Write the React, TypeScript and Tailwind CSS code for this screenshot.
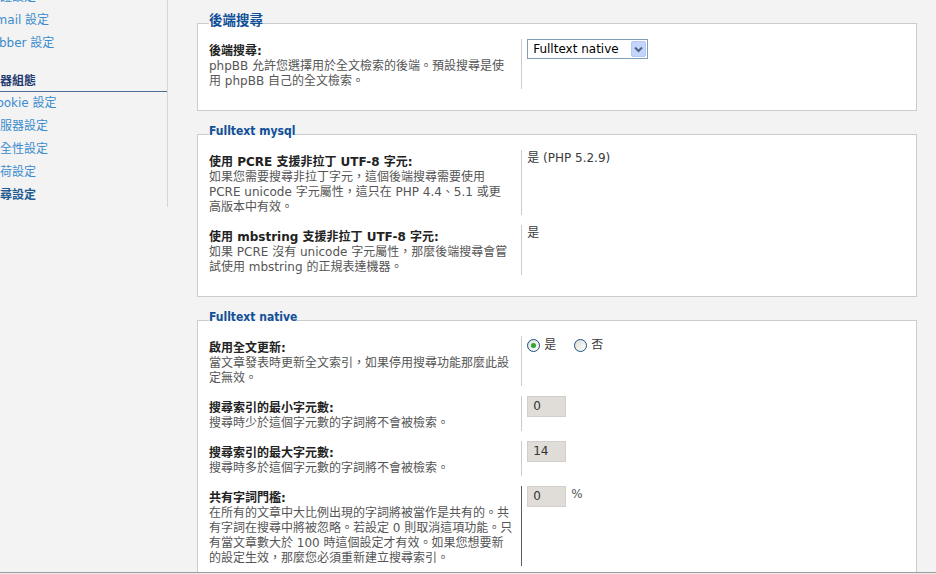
import type { ReactNode } from "react";

const sans = "font-['DejaVu_Sans','Noto_Sans_CJK_TC',sans-serif]";

type MenuItem = { label: string; active?: boolean };

const clientMenu: MenuItem[] = [
  { label: "認證設定" },
  { label: "Email 設定" },
  { label: "Jabber 設定" },
];

const serverMenu: MenuItem[] = [
  { label: "Cookie 設定" },
  { label: "伺服器設定" },
  { label: "安全性設定" },
  { label: "負荷設定" },
  { label: "搜尋設定", active: true },
];

// menu is scrolled sideways, so the first letters run under the left edge
const MenuLink = ({ item }: { item: MenuItem }) => (
  <div
    className={`-ml-3 h-[23px] whitespace-nowrap leading-[23px] ${
      item.active ? "font-bold text-[#1f5b91]" : "text-[#3a8cce]"
    }`}
  >
    {item.label}
  </div>
);

const Sidebar = () => (
  <div className="w-[168px] shrink-0 self-start overflow-hidden border-r border-[#d6d6d6] text-[12px]">
    <div className="-mt-[14px]">
      {clientMenu.map((item) => (
        <MenuLink key={item.label} item={item} />
      ))}
    </div>
    <div className="-ml-6 mt-[15px] h-[22px] whitespace-nowrap border-b border-[#4d6f93] font-bold leading-[22px] text-[#1e3a6e]">
      伺服器組態
    </div>
    {serverMenu.map((item) => (
      <MenuLink key={item.label} item={item} />
    ))}
  </div>
);

interface PanelProps {
  title: string;
  titleClass: string;
  first?: boolean;
  children: ReactNode;
}

const Panel = ({ title, titleClass, first, children }: PanelProps) => (
  <fieldset
    className={`${first ? "" : "mt-[12px]"} border border-[#cccccc] bg-white px-[11px] pt-[5px] pb-[21px]`}
  >
    <legend className={`pb-[6px] font-bold leading-[16px] text-[#115098] ${titleClass}`}>{title}</legend>
    <div className="flex flex-col gap-[10px]">{children}</div>
  </fieldset>
);

interface RowProps {
  label: string;
  desc: string[];
  dark?: boolean;
  children: ReactNode;
}

const Row = ({ label, desc, dark, children }: RowProps) => (
  <div className="flex">
    <div
      className={`w-[45%] shrink-0 border-r pt-[4px] ${dark ? "border-[#5c5c5c]" : "border-[#cccccc]"}`}
    >
      <div className="whitespace-nowrap font-bold leading-[16px] text-[#222222]">{label}</div>
      <div className="leading-[15px] text-[#555555]">
        {desc.map((line) => (
          <div key={line} className="whitespace-nowrap">
            {line}
          </div>
        ))}
      </div>
    </div>
    <div className="flex-1 pl-[5px] leading-[16px] text-[#3a3a3a]">{children}</div>
  </div>
);

const FakeSelect = ({ value }: { value: string }) => (
  <div className="flex h-[20px] w-[121px] items-center justify-between border border-[#7f9db9] bg-white pl-[5px] pr-px">
    <span className="text-[12px] text-black">{value}</span>
    <span className="flex h-[16px] w-[15px] items-center justify-center rounded-[2px] border border-[#b3c8f3] bg-[#c4d5fc]">
      <svg width="9" height="7" viewBox="0 0 9 7">
        <path d="M1 1.5 L4.5 5 L8 1.5" fill="none" stroke="#4d6185" strokeWidth="2" />
      </svg>
    </span>
  </div>
);

const Radio = ({ checked, label }: { checked?: boolean; label: string }) => (
  <span className="flex items-center gap-[4px]">
    <span className="flex h-[13px] w-[13px] items-center justify-center rounded-full border border-[#1c5180] bg-gradient-to-br from-[#dcdcd7] to-white">
      {checked && <span className="h-[5px] w-[5px] rounded-full bg-[#2fa42f]" />}
    </span>
    <span>{label}</span>
  </span>
);

const NumberBox = ({ value }: { value: string }) => (
  <div className="h-[21px] w-[39px] border border-[#d2cfca] bg-[#e0ddd8] pl-[5px] text-[12px] leading-[19px] text-[#333333]">
    {value}
  </div>
);

export default function App() {
  return (
    <div className={`${sans} h-[574px] w-[936px] overflow-hidden bg-[#f3f3f3] text-[12px]`}>
      <div className="flex h-[572px] overflow-hidden">
        <Sidebar />
        <div className="flex-1 pl-[29px] pr-[19px] pt-[12px]">
          <Panel first title="後端搜尋" titleClass="text-[13.5px]">
            <Row
              label="後端搜尋:"
              desc={["phpBB 允許您選擇用於全文檢索的後端。預設搜尋是使", "用 phpBB 自己的全文檢索。"]}
            >
              <FakeSelect value="Fulltext native" />
            </Row>
          </Panel>

          <Panel
            title="Fulltext mysql"
            titleClass="font-['DejaVu_Sans_Condensed','DejaVu_Sans',sans-serif] text-[12px]"
          >
            <Row
              label="使用 PCRE 支援非拉丁 UTF-8 字元:"
              desc={[
                "如果您需要搜尋非拉丁字元，這個後端搜尋需要使用",
                "PCRE unicode 字元屬性，這只在 PHP 4.4、5.1 或更",
                "高版本中有效。",
              ]}
            >
              是 (PHP 5.2.9)
            </Row>
            <Row
              label="使用 mbstring 支援非拉丁 UTF-8 字元:"
              desc={["如果 PCRE 沒有 unicode 字元屬性，那麼後端搜尋會嘗", "試使用 mbstring 的正規表達機器。"]}
            >
              是
            </Row>
          </Panel>

          <Panel
            title="Fulltext native"
            titleClass="font-['DejaVu_Sans_Condensed','DejaVu_Sans',sans-serif] text-[12px]"
          >
            <Row
              label="啟用全文更新:"
              desc={["當文章發表時更新全文索引，如果停用搜尋功能那麼此設", "定無效。"]}
            >
              <div className="flex gap-[18px] pt-px">
                <Radio checked label="是" />
                <Radio label="否" />
              </div>
            </Row>
            <Row label="搜尋索引的最小字元數:" desc={["搜尋時少於這個字元數的字詞將不會被檢索。"]}>
              <NumberBox value="0" />
            </Row>
            <Row label="搜尋索引的最大字元數:" desc={["搜尋時多於這個字元數的字詞將不會被檢索。"]}>
              <NumberBox value="14" />
            </Row>
            <Row
              dark
              label="共有字詞門檻:"
              desc={[
                "在所有的文章中大比例出現的字詞將被當作是共有的。共",
                "有字詞在搜尋中將被忽略。若設定 0 則取消這項功能。只",
                "有當文章數大於 100 時這個設定才有效。如果您想要新",
                "的設定生效，那麼您必須重新建立搜尋索引。",
              ]}
            >
              <div className="flex items-start gap-[5px]">
                <NumberBox value="0" />
                <span className="text-[#555555]">%</span>
              </div>
            </Row>
          </Panel>
        </div>
      </div>
      <div className="h-[2px] border-t border-[#9c9c9c] bg-[#ececec]" />
    </div>
  );
}
